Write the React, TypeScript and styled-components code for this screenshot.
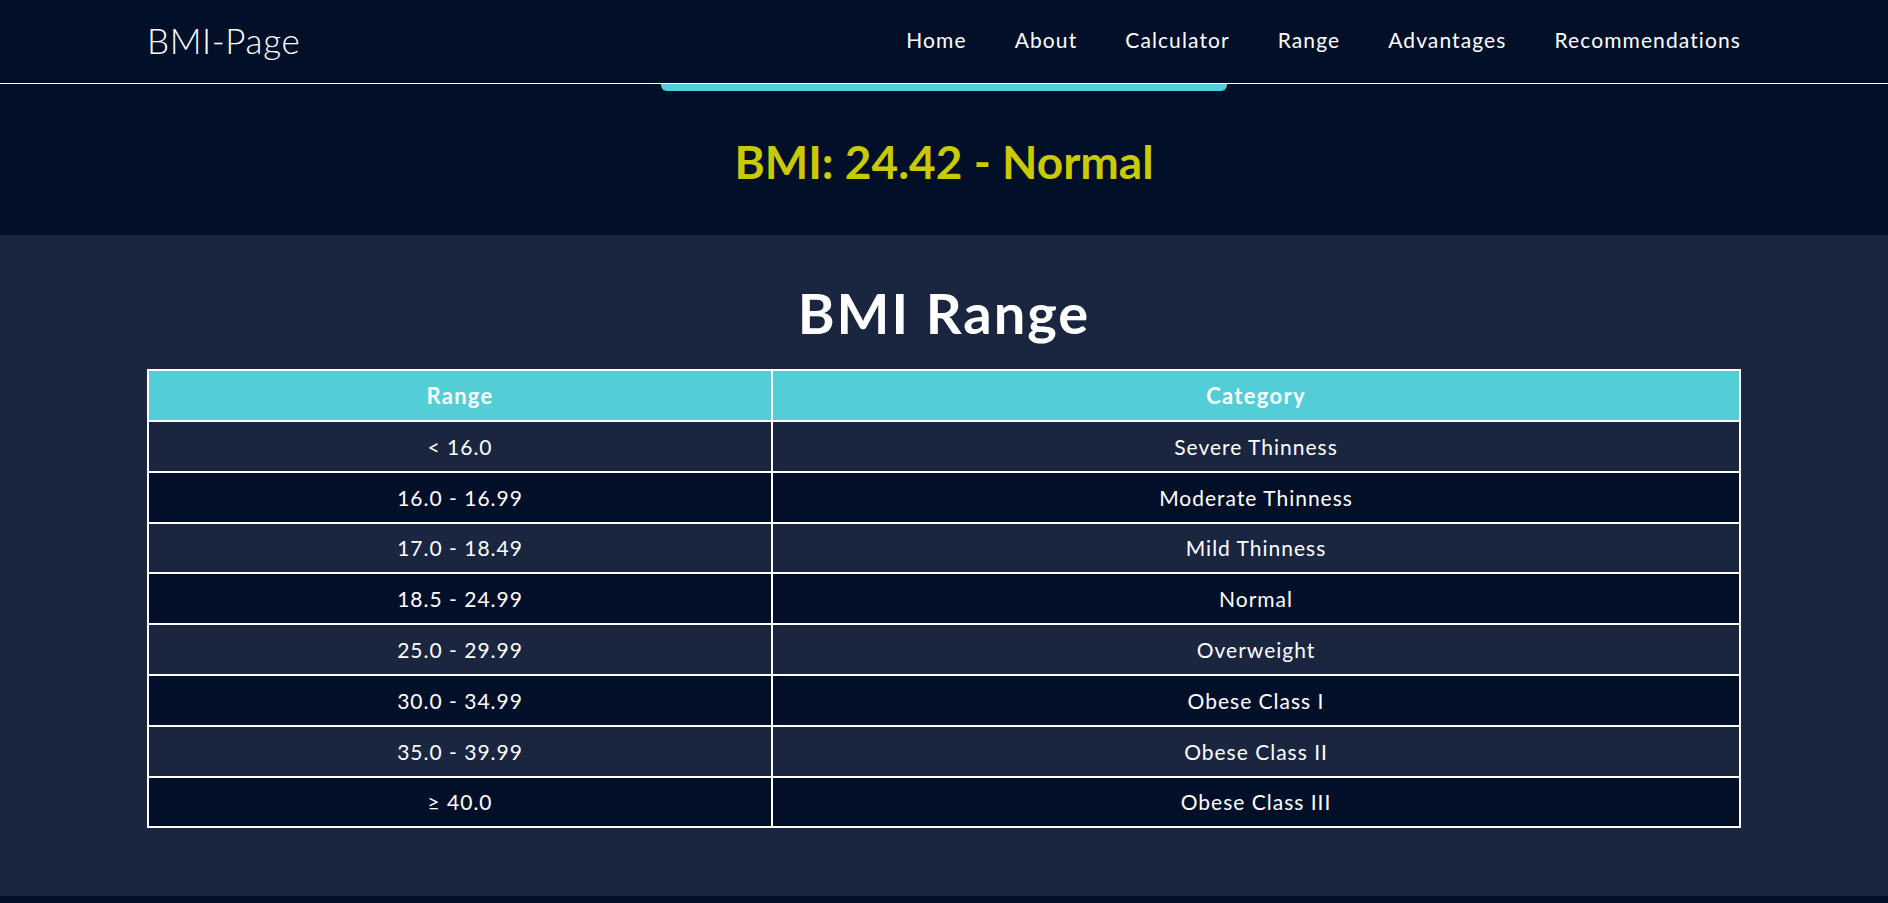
import React from "react";
import styled, { createGlobalStyle } from "styled-components";

const GlobalStyle = createGlobalStyle`
  * { box-sizing: border-box; }
  html, body { margin: 0; padding: 0; }
  body {
    background: #020f28;
    color: #ffffff;
    font-family: "Lato", "Open Sans", sans-serif;
  }
`;

const Header = styled.header`
  height: 84px;
  border-bottom: 1px solid #ffffff;
  background: #020f28;
  display: flex;
  align-items: center;
  justify-content: space-between;
  padding: 0 147px 4px 147px;
`;

const Logo = styled.div`
  font-size: 35px;
  font-weight: 300;
  color: #ffffff;
  letter-spacing: 0.6px;
`;

const Nav = styled.nav`
  display: flex;
  gap: 48px;
`;

const NavLink = styled.a`
  color: #ffffff;
  text-decoration: none;
  font-size: 21px;
  font-weight: 400;
  letter-spacing: 1.1px;
`;

const ResultSection = styled.section`
  background: #020f28;
  height: 151px;
  display: flex;
  flex-direction: column;
  align-items: center;
`;

const ProgressBar = styled.div`
  width: 30%;
  height: 7px;
  background: #53cdd6;
  border-radius: 0 0 6px 6px;
`;

const ResultText = styled.h2`
  margin: 43px 0 0;
  font-size: 46px;
  line-height: 1.2;
  font-weight: 700;
  color: #c9c904;
`;

const RangeSection = styled.section`
  background: #1a2640;
  padding: 44px 147px 68px;
  display: flex;
  flex-direction: column;
  align-items: center;
`;

const Title = styled.h1`
  margin: 0 0 23px;
  font-size: 56px;
  line-height: 1.2;
  font-weight: 700;
  letter-spacing: 2px;
  color: #ffffff;
`;

const Table = styled.table`
  width: 100%;
  border-collapse: collapse;
  table-layout: fixed;
  border: 2px solid #ffffff;
`;

const HeadCell = styled.th`
  background: #53cdd6;
  color: #ffffff;
  font-size: 22px;
  font-weight: 700;
  letter-spacing: 1.3px;
  height: 50.8px;
  padding: 0;
  border: 2px solid #ffffff;
  text-align: center;
`;

const Row = styled.tr<{ $dark: boolean }>`
  background: ${(p) => (p.$dark ? "#020f28" : "#1a2640")};
`;

const Cell = styled.td`
  font-size: 21px;
  font-weight: 400;
  letter-spacing: 1px;
  color: #ffffff;
  height: 50.8px;
  padding: 0;
  border: 2px solid #ffffff;
  text-align: center;
`;

const Footer = styled.footer`
  background: #020f28;
  height: 40px;
`;

const rows: [string, string][] = [
  ["< 16.0", "Severe Thinness"],
  ["16.0 - 16.99", "Moderate Thinness"],
  ["17.0 - 18.49", "Mild Thinness"],
  ["18.5 - 24.99", "Normal"],
  ["25.0 - 29.99", "Overweight"],
  ["30.0 - 34.99", "Obese Class I"],
  ["35.0 - 39.99", "Obese Class II"],
  ["≥ 40.0", "Obese Class III"],
];

const navItems = ["Home", "About", "Calculator", "Range", "Advantages", "Recommendations"];

export default function App() {
  return (
    <>
      <GlobalStyle />
      <Header>
        <Logo>BMI-Page</Logo>
        <Nav>
          {navItems.map((n) => (
            <NavLink key={n} href="#">
              {n}
            </NavLink>
          ))}
        </Nav>
      </Header>
      <ResultSection>
        <ProgressBar />
        <ResultText>BMI: 24.42 - Normal</ResultText>
      </ResultSection>
      <RangeSection>
        <Title>BMI Range</Title>
        <Table>
          <colgroup>
            <col style={{ width: "39.2%" }} />
            <col />
          </colgroup>
          <thead>
            <tr>
              <HeadCell>Range</HeadCell>
              <HeadCell>Category</HeadCell>
            </tr>
          </thead>
          <tbody>
            {rows.map(([r, c], i) => (
              <Row key={r} $dark={i % 2 === 1}>
                <Cell>{r}</Cell>
                <Cell>{c}</Cell>
              </Row>
            ))}
          </tbody>
        </Table>
      </RangeSection>
      <Footer />
    </>
  );
}
